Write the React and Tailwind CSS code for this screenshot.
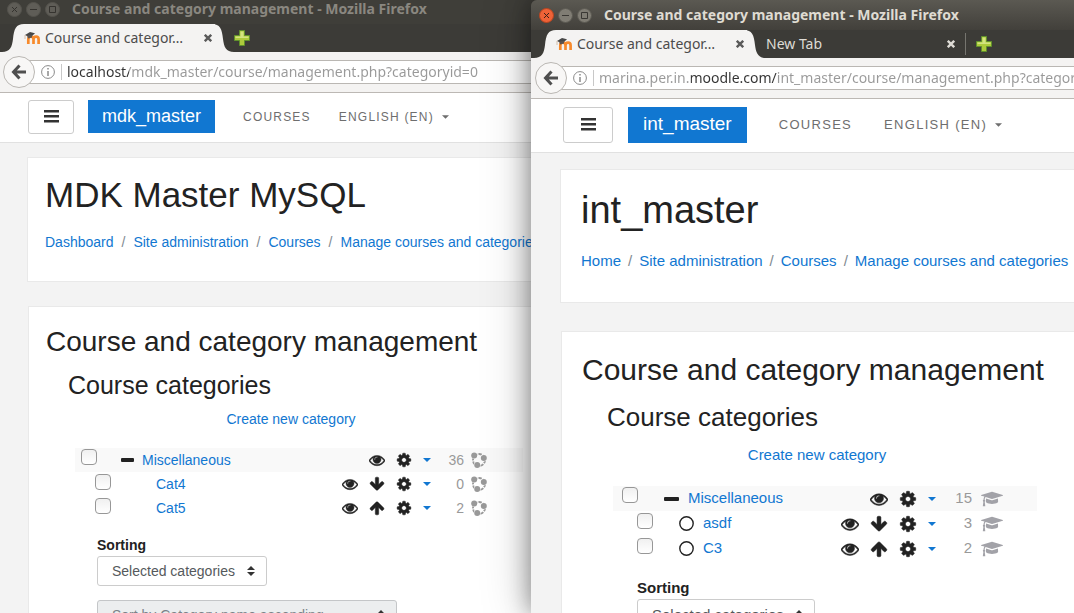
import React, { useState } from 'react';
import clsx from 'clsx';

const BACK_WINDOW = {
    id: 'mdk',
    active: false,
    brand: 'mdk_master',
    heading: 'MDK Master MySQL',
    url: 'localhost/mdk_master/course/management.php?categoryid=0',
    crumbs: ['Dashboard', 'Site administration', 'Courses', 'Manage courses and categories'],
    countIcon: 'cohort',
    categories: [
        { name: 'Miscellaneous', count: 36, root: true },
        { name: 'Cat4', count: 0, move: 'down' },
        { name: 'Cat5', count: 2, move: 'up' },
    ],
    css: {
        titlebar: 'h-6 pb-1.5 pl-[7px]',
        title: 'text-[#8a8780]',
        tabs: 'pl-0.5',
        toolbar: 'pl-[3px]',
        url: 'bg-[linear-gradient(to_right,#333_62px,#999_62px)]',
        page: 'text-sm',
        nav: 'h-[50px] pl-7',
        menu: 'w-[46px] h-[34px] mr-3.5',
        brand: 'text-[18px] h-[33px] px-3.5 mr-7',
        navLinks: 'text-xs gap-7',
        main: 'pt-3.5 pl-[27px] gap-6',
        card: 'pl-[17px]',
        header: 'pt-[18px] pb-7',
        h1: 'text-[35px] leading-[38px]',
        crumbs: 'mt-[18px] leading-[21px] gap-2',
        crumb: 'gap-2',
        body: 'pt-[19px]',
        h2: 'text-[28px] leading-[31px]',
        h3: 'text-[25px] leading-[27px] mt-[15px] ml-[22px]',
        list: 'ml-[29px] max-w-[448px]',
        create: 'mt-2.5 leading-[21px] mb-[18px]',
        row: 'h-6 pr-9',
        rootPad: 'pl-1.5',
        childPad: 'pl-5',
        slot: 'ml-6 w-[13px] mr-2',
        cell: 'w-[27px]',
        icon: 'size-4',
        count: 'w-[27px]',
        countIcon: 'ml-[7px] w-4 h-4',
        sorting: 'mt-[15px] pl-[22px]',
        label: 'leading-[21px]',
        select: 'h-[30px] w-[170px] mb-3.5',
        selectWide: 'h-[30px] w-[300px]',
    },
};

const FRONT_WINDOW = {
    id: 'int',
    active: true,
    brand: 'int_master',
    heading: 'int_master',
    url: 'marina.per.in.moodle.com/int_master/course/management.php?categoryid=0',
    crumbs: ['Home', 'Site administration', 'Courses', 'Manage courses and categories', 'Miscellaneous'],
    countIcon: 'cap',
    categories: [
        { name: 'Miscellaneous', count: 15, root: true },
        { name: 'asdf', count: 3, move: 'down', dot: true },
        { name: 'C3', count: 2, move: 'up', dot: true },
    ],
    css: {
        titlebar: 'h-[30px] pl-2',
        title: 'text-[#dfdbd2]',
        tabs: 'pl-[3px]',
        toolbar: 'pl-1',
        url: 'bg-[linear-gradient(to_right,#999_92px,#333_92px,#333_178px,#999_178px)]',
        page: 'text-[15px]',
        nav: 'h-[54px] pl-8',
        menu: 'w-[50px] h-9 mr-[15px]',
        brand: 'text-[19px] h-9 px-[15px] mr-8',
        navLinks: 'text-[13px] gap-8',
        main: 'pt-4 pl-[29px] gap-7',
        card: 'pl-5',
        header: 'pt-[19px] pb-[30px]',
        h1: 'text-[38px] leading-[42px]',
        crumbs: 'mt-[18px] leading-[23px] gap-[7px]',
        crumb: 'gap-[7px]',
        body: 'pt-[21px]',
        h2: 'text-[30px] leading-[33px]',
        h3: 'text-[26px] leading-[29px] mt-[17px] ml-[25px]',
        list: 'ml-[31px] max-w-[424px]',
        create: 'mt-[11px] leading-[23px] mb-5',
        row: 'h-[25px] pr-[34px]',
        rootPad: 'pl-[9px]',
        childPad: 'pl-6',
        slot: 'ml-[26px] w-[15px] mr-[9px]',
        cell: 'w-[29px]',
        icon: 'size-[18px]',
        count: 'w-[30px]',
        countIcon: 'ml-[9px] w-[22px] h-[18px]',
        sorting: 'mt-[15px] pl-6',
        label: 'leading-[23px]',
        select: 'h-8 w-[178px] mb-[15px]',
        selectWide: 'h-8 w-[320px]',
    },
};

const ICONS = {
    eye: 'M1664 960q-152-236-381-353 61 104 61 225 0 185-131.5 316.5t-316.5 131.5-316.5-131.5-131.5-316.5q0-121 61-225-229 117-381 353 133 205 333.5 326.5t434.5 121.5 434.5-121.5 333.5-326.5zm-720-384q0-20-14-34t-34-14q-125 0-214.5 89.5t-89.5 214.5q0 20 14 34t34 14 34-14 14-34q0-86 61-147t147-61q20 0 34-14t14-34zm848 384q0 34-20 69-140 230-376.5 368.5t-499.5 138.5-499.5-139-376.5-368q-20-35-20-69t20-69q140-229 376.5-368t499.5-139 499.5 139 376.5 368q20 35 20 69z',
    cog: 'M1152 896q0-106-75-181t-181-75-181 75-75 181 75 181 181 75 181-75 75-181zm512-109v222q0 12-8 23t-20 13l-185 28q-19 54-39 91 35 50 107 138 10 12 10 25t-9 23q-27 37-99 108t-94 71q-12 0-26-9l-138-108q-44 23-91 38-16 136-29 186-7 28-36 28h-222q-14 0-24.5-8.5t-11.5-21.5l-28-184q-49-16-90-37l-141 107q-10 9-25 9-14 0-25-11-126-114-165-168-7-10-7-23 0-12 8-23 15-21 51-66.5t54-70.5q-27-50-41-99l-183-27q-13-2-21-12.5t-8-23.5v-222q0-12 8-23t19-13l186-28q14-46 39-92-40-57-107-138-10-12-10-24 0-10 9-23 26-36 98.5-107.5t94.5-71.5q13 0 26 10l138 107q44-23 91-38 16-136 29-186 7-28 36-28h222q14 0 24.5 8.5t11.5 21.5l28 184q49 16 90 37l142-107q9-9 24-9 13 0 25 10 129 119 165 170 7 8 7 22 0 12-8 23-15 21-51 66.5t-54 70.5q26 50 41 98l183 28q13 2 21 12.5t8 23.5z',
    up: 'M1675 971q0 51-37 90l-75 75q-38 38-91 38-54 0-90-38l-294-293v704q0 52-37.5 84.5t-90.5 32.5h-128q-53 0-90.5-32.5t-37.5-84.5v-704l-294 293q-36 38-90 38t-90-38l-75-75q-38-38-38-90 0-53 38-91l651-651q35-37 90-37 54 0 91 37l651 651q37 39 37 91z',
    cap: 'M1774 836l18 316q4 69-82 128t-235 93.5-323 34.5-323-34.5-235-93.5-82-128l18-316 574 181q22 7 48 7t48-7zm530-324q0 23-22 31l-1120 352q-4 1-10 1t-10-1l-652-206q-43 34-71 111.5t-34 178.5q63 36 63 109 0 69-58 107l58 433q2 14-8 25-9 11-24 11h-192q-15 0-24-11-10-11-8-25l58-433q-58-38-58-107 0-73 65-111 11-207 98-330l-333-104q-22-8-22-31t22-31l1120-352q4-1 10-1t10 1l1120 352q22 8 22 31z',
};

function Icon({ name, className }) {
    return (
        <svg viewBox="0 0 1792 1792" className={className} fill="currentColor" stroke="currentColor" strokeWidth="50" aria-hidden="true">
            <path d={ICONS[name]} />
        </svg>
    );
}

function Caret({ className }) {
    return (
        <svg viewBox="0 0 8 4" className={clsx('h-1', className)} fill="currentColor" aria-hidden="true">
            <path d="M0 0h8L4 4z" />
        </svg>
    );
}

function CountIcon({ name, className }) {
    if (name === 'cap') {
        return (
            <svg viewBox="0 0 2304 1792" className={className} fill="#a2a2a8" aria-hidden="true">
                <path d={ICONS.cap} />
            </svg>
        );
    }
    // three members joined by a dashed ring
    return (
        <svg viewBox="0 0 16 16" className={className} fill="#999" aria-hidden="true">
            <circle cx="8" cy="8" r="6" fill="none" stroke="#999" strokeWidth="1.9" strokeDasharray="3.4 1.1" />
            <circle cx="3.2" cy="3.4" r="3.4" fill="#fff" />
            <circle cx="12.8" cy="6" r="3.4" fill="#fff" />
            <circle cx="6.2" cy="13" r="3.4" fill="#fff" />
            <circle cx="3.2" cy="3.4" r="3" />
            <circle cx="12.8" cy="6" r="3" />
            <circle cx="6.2" cy="13" r="3" />
        </svg>
    );
}

function MoodleIcon() {
    return (
        <svg viewBox="0 0 16 14" className="w-4 h-3.5 shrink-0" aria-hidden="true">
            <path d="M4.3 13V8.4Q4.3 5.6 6.9 5.6 9.5 5.6 9.5 8.4V13M9.5 8.4Q9.5 5.6 12.1 5.6 14.6 5.6 14.6 8.4V13" fill="none" stroke="#f78a2c" strokeWidth="2.7" />
            <path d="M1 4 6 1l5 1.2L8 5 4 5.4z" fill="#474747" />
            <path d="M3.2 4.5 8 4v2.4L4 7.4z" fill="#5b5450" />
            <path d="M1 4v4" stroke="#c9a98e" strokeWidth="0.7" />
        </svg>
    );
}

function CloseIcon() {
    return (
        <svg viewBox="0 0 8 8" className="size-2" fill="none" stroke="currentColor" strokeWidth="2.4" aria-hidden="true">
            <path d="M.8.8l6.4 6.4M7.2.8.8 7.2" />
        </svg>
    );
}

function WindowButton({ label, active, close, children }) {
    return (
        <button
            aria-label={label}
            className={clsx(
                'size-[15px] rounded-full border flex items-center justify-center',
                !active && 'bg-[#5f5d57] border-[#55534d] text-[#35332f]',
                active && close && 'bg-[#ee6237] border-[#b9441f] text-[#3b2018]',
                active && !close && 'bg-[#807d74] border-[#5b5952] text-[#3a3834]'
            )}
        >
            <svg viewBox="0 0 7 7" className="size-[7px]" fill="none" stroke="currentColor" aria-hidden="true">
                {children}
            </svg>
        </button>
    );
}

function Chrome({ win }) {
    const { css, active } = win;
    const [url, setUrl] = useState(win.url);

    return (
        <div className="font-['Noto_Sans','Open_Sans',sans-serif] shrink-0">
            <div
                className={clsx(
                    'flex items-center gap-1',
                    active ? 'bg-linear-to-b from-[#5b5952] to-[#42403b]' : 'bg-[#3f3e39]',
                    css.titlebar
                )}
            >
                <WindowButton label="Close" active={active} close><path d="M1 1l5 5M6 1 1 6" /></WindowButton>
                <WindowButton label="Minimize" active={active}><path d="M0 3.5h7" /></WindowButton>
                <WindowButton label="Maximize" active={active}><path d="M.5.5h6v6h-6z" /></WindowButton>
                <span className={clsx('ml-2 text-sm leading-[18px] font-bold whitespace-nowrap', css.title)}>
                    Course and category management - Mozilla Firefox
                </span>
            </div>

            <div className={clsx('h-7 flex items-center bg-[#3c3b37] text-sm', css.tabs)}>
                <svg viewBox="0 0 22 28" className="w-[22px] h-7 shrink-0" fill="#f4f3f2" aria-hidden="true">
                    <path d="M0 28C8 28 10 23 11 15 12 5 14 0 22 0V28z" />
                </svg>
                <div className="h-7 w-[188px] shrink-0 flex items-center bg-[#f4f3f2] text-[#4c4c4c]">
                    <MoodleIcon />
                    <span className="ml-[5px] whitespace-nowrap">Course and categor…</span>
                    <button aria-label="Close tab" className="ml-auto text-[#5a5a5a]"><CloseIcon /></button>
                </div>
                <svg viewBox="0 0 22 28" className="w-[22px] h-7 shrink-0" fill="#f4f3f2" aria-hidden="true">
                    <path d="M22 28C14 28 12 23 11 15 10 5 8 0 0 0V28z" />
                    <path d="M0 0h3v28H0z" />
                </svg>
                {active && (
                    <div className="h-[22px] w-[200px] shrink-0 flex items-center border-r border-[#76756f] text-[#dedbd5]">
                        <span>New Tab</span>
                        <button aria-label="Close tab" className="ml-auto mr-2.5"><CloseIcon /></button>
                    </div>
                )}
                <button aria-label="Open a new tab" className={active ? 'ml-2.5' : ''}>
                    <svg viewBox="0 0 16 16" className="size-4" aria-hidden="true">
                        <path d="M5.5.5h5v5h5v5h-5v5h-5v-5h-5v-5h5z" fill="#aecb3c" stroke="#60902c" />
                        <path d="M6.5 1.5h3v5h5v1.5h-13V6.5h5z" fill="#d3e480" />
                    </svg>
                </button>
            </div>

            <div className={clsx('h-[41px] flex items-center bg-[#f4f3f2] border-b border-[#bcb8b4]', css.toolbar)}>
                <button aria-label="Back" className="relative z-10 size-8 shrink-0 rounded-full border border-[#bab7b3] bg-[#f8f7f6] flex items-center justify-center text-[#4f4f4f]">
                    <svg viewBox="0 0 16 16" className="size-4" fill="none" stroke="currentColor" strokeWidth="3" aria-hidden="true">
                        <path d="M8.5 1.5 2.5 8l6 6.5M3 8h12" />
                    </svg>
                </button>
                <div className="-ml-2 pl-3.5 h-6 flex-1 flex items-center bg-white border-y border-[#bab7b3]">
                    <svg viewBox="0 0 14 14" className="size-3.5 shrink-0" fill="none" stroke="#8a8a8a" aria-hidden="true">
                        <circle cx="7" cy="7" r="6.4" />
                        <path d="M7 6v5M7 3v1.6" strokeWidth="1.5" />
                    </svg>
                    <span className="ml-1.5 w-px h-4 bg-[#c8c8c8]" />
                    <input
                        type="text"
                        aria-label="Address"
                        value={url}
                        onChange={e => setUrl(e.target.value)}
                        className={clsx('ml-[5px] flex-1 min-w-0 text-sm leading-5 outline-none bg-clip-text text-transparent', css.url)}
                    />
                </div>
            </div>
        </div>
    );
}

function CategoryRow({ win, category }) {
    const { css } = win;
    return (
        <li className={clsx('flex items-center', css.row, category.root ? ['bg-[#f9f9f9]', css.rootPad] : css.childPad)}>
            <input
                type="checkbox"
                aria-label={category.name}
                className={clsx(
                    'size-4 shrink-0 self-start appearance-none rounded-[4px] border border-[#979797] bg-linear-to-b from-[#f0f0f0] to-white',
                    category.root ? 'mt-px' : 'mt-0.5'
                )}
            />
            <span className={clsx('shrink-0 flex items-center', css.slot)}>
                {category.root && <span className="w-full h-1 rounded-[1px] bg-[#222]" />}
                {category.dot && (
                    <svg viewBox="0 0 15 15" className="w-full" fill="none" stroke="#222" strokeWidth="1.4" aria-hidden="true">
                        <circle cx="7.5" cy="7.5" r="6.7" />
                    </svg>
                )}
            </span>
            <a href="#category" className="text-[#1177d1]">{category.name}</a>
            <span className="ml-auto flex items-center text-[#222]">
                <button aria-label="Hide" className={clsx('flex justify-center', css.cell)}>
                    <Icon name="eye" className={css.icon} />
                </button>
                {category.move && (
                    <button aria-label={`Move ${category.move}`} className={clsx('flex justify-center', css.cell)}>
                        <Icon name="up" className={clsx(css.icon, category.move === 'down' && 'rotate-180')} />
                    </button>
                )}
                <button aria-label="Settings" className={clsx('flex justify-center', css.cell)}>
                    <Icon name="cog" className={css.icon} />
                </button>
                <button aria-label="More actions" className="w-5 flex justify-center text-[#1177d1]">
                    <Caret className="w-2" />
                </button>
            </span>
            <span className={clsx('text-right text-[#999]', css.count)}>{category.count}</span>
            <CountIcon name={win.countIcon} className={clsx('shrink-0', css.countIcon)} />
        </li>
    );
}

function SortSelect({ id, label, className, disabled, children }) {
    return (
        <div className={clsx('relative', className)}>
            <select
                id={id}
                aria-label={label}
                disabled={disabled}
                className={clsx(
                    'size-full appearance-none rounded-[3px] border px-3.5',
                    disabled ? 'bg-[#eceeef] border-[#c4c6c8] text-[#7b8288]' : 'bg-white border-[#cccccc] text-[#55595c]'
                )}
            >
                {children}
            </select>
            <svg viewBox="0 0 8 10" className="absolute right-3 top-1/2 -translate-y-1/2 w-2 h-2.5 pointer-events-none" fill="#333" aria-hidden="true">
                <path d="M0 4h8L4 0zM0 6h8L4 10z" />
            </svg>
        </div>
    );
}

function MoodlePage({ win }) {
    const { css } = win;
    return (
        <div className={clsx("flex-1 bg-[#f3f3f3] font-['Liberation_Sans',Arial,sans-serif] text-[#222]", css.page)}>
            <nav className={clsx('flex items-center pb-0.5 bg-white border-b border-[#e1e1e1]', css.nav)}>
                <button aria-label="Side panel" className={clsx('shrink-0 rounded-[3px] border border-[#ccc] bg-white flex items-center justify-center', css.menu)}>
                    <svg viewBox="0 0 15 13" className="w-[15px] h-[13px]" fill="#333" aria-hidden="true">
                        <path d="M0 0h15v2.6H0zM0 5h15v2.6H0zM0 10h15v2.6H0z" />
                    </svg>
                </button>
                <a href="#home" className={clsx('flex items-center bg-[#1177d1] text-white', css.brand)}>{win.brand}</a>
                <div className={clsx('flex items-center tracking-widest text-[#6e6e6e] whitespace-nowrap', css.navLinks)}>
                    <a href="#courses">COURSES</a>
                    <a href="#language" className="flex items-center gap-2">ENGLISH (EN) <Caret className="w-[7px]" /></a>
                </div>
            </nav>

            <main className={clsx('flex flex-col', css.main)}>
                <header className={clsx('bg-white border border-r-0 border-[#e9e9e9]', css.card, css.header)}>
                    <h1 className={css.h1}>{win.heading}</h1>
                    <ol className={clsx('flex whitespace-nowrap', css.crumbs)}>
                        {win.crumbs.map((crumb, i) => (
                            <li key={crumb} className={clsx('flex', css.crumb)}>
                                {i > 0 && <span className="text-[#818a91]">/</span>}
                                <a href="#crumb" className="text-[#1177d1]">{crumb}</a>
                            </li>
                        ))}
                    </ol>
                </header>

                <section className={clsx('ml-px bg-white border border-r-0 border-[#e9e9e9] pb-10', css.card, css.body)}>
                    <h2 className={clsx('whitespace-nowrap', css.h2)}>Course and category management</h2>
                    <h3 className={css.h3}>Course categories</h3>
                    <div className={css.list}>
                        <p className={clsx('text-center pr-4', css.create)}>
                            <a href="#create" className="text-[#1177d1]">Create new category</a>
                        </p>
                        <ul>
                            {win.categories.map(category => (
                                <CategoryRow key={category.name} win={win} category={category} />
                            ))}
                        </ul>
                        <div className={css.sorting}>
                            <label htmlFor={`${win.id}-sort`} className={clsx('block font-bold', css.label)}>Sorting</label>
                            <SortSelect id={`${win.id}-sort`} className={css.select}>
                                <option>Selected categories</option>
                                <option>All categories</option>
                            </SortSelect>
                            <SortSelect id={`${win.id}-sort-by`} label="Sort categories by" className={css.selectWide} disabled>
                                <option>Sort by Category name ascending</option>
                            </SortSelect>
                        </div>
                    </div>
                </section>
            </main>
        </div>
    );
}

function BrowserWindow({ win, className }) {
    return (
        <div className={clsx('flex flex-col overflow-hidden', className)}>
            <Chrome win={win} />
            <MoodlePage win={win} />
        </div>
    );
}

export default function App() {
    return (
        <div className="relative h-screen overflow-hidden bg-[#3c3b37]">
            <BrowserWindow win={BACK_WINDOW} className="h-full" />
            <BrowserWindow
                win={FRONT_WINDOW}
                className="absolute inset-y-0 right-0 left-[531px] rounded-tl-md shadow-[0_0_50px_rgba(0,0,0,0.25),0_0_24px_rgba(0,0,0,0.4)]"
            />
        </div>
    );
}
